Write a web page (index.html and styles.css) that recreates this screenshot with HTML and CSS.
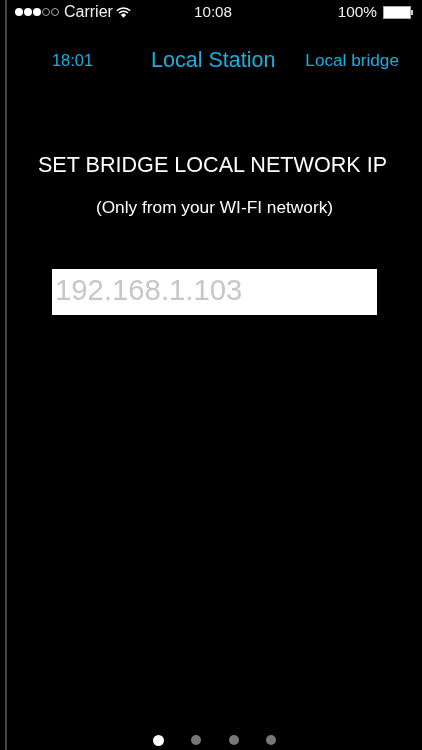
FILE: index.html
```html
<!DOCTYPE html>
<html lang="en">
<head>
    <meta charset="UTF-8">
    <meta name="viewport" content="width=device-width, initial-scale=1.0">
    <title>Local bridge</title>
    <link rel="stylesheet" href="styles.css">
</head>
<body>
    <div class="screen">
        <div class="status-bar">
            <div class="status-left">
                <div class="signal">
                    <span class="dot"></span>
                    <span class="dot"></span>
                    <span class="dot"></span>
                    <span class="dot empty"></span>
                    <span class="dot empty"></span>
                </div>
                <span class="carrier">Carrier</span>
                <svg class="wifi" width="15" height="11" viewBox="0 0 15 11">
                    <path d="M0.8 3.7 A9.6 9.6 0 0 1 14.2 3.7" fill="none" stroke="#fff" stroke-width="1.5"/>
                    <path d="M3 6 A6.4 6.4 0 0 1 12 6" fill="none" stroke="#fff" stroke-width="1.5"/>
                    <path d="M7.5 10.8 L4.9 7.9 A3.7 3.7 0 0 1 10.1 7.9 Z" fill="#fff"/>
                </svg>
            </div>
            <span class="clock">10:08</span>
            <div class="status-right">
                <span class="percent">100%</span>
                <div class="battery"></div>
                <div class="battery-tip"></div>
            </div>
        </div>

        <div class="nav-bar">
            <span class="nav-left">18:01</span>
            <span class="nav-title">Local Station</span>
            <span class="nav-right">Local bridge</span>
        </div>

        <div class="content">
            <h2>SET BRIDGE LOCAL NETWORK IP</h2>
            <p>(Only from your WI-FI network)</p>
            <input class="ip-input" type="text" placeholder="192.168.1.103">
        </div>

        <div class="pager">
            <span class="page active"></span>
            <span class="page"></span>
            <span class="page"></span>
            <span class="page"></span>
        </div>
    </div>
</body>
</html>
```

FILE: styles.css
```css
html, body {
    margin: 0;
    height: 100%;
    background: #000;
    overflow: hidden;
}
body {
    font-family: "Liberation Sans", Arial, sans-serif;
    color: #fff;
}
.screen {
    display: flex;
    flex-direction: column;
    box-sizing: border-box;
    height: 750px;
    margin-left: 5px;
    border-left: 2px solid #4a4644;
    filter: blur(0.4px);
}
.status-bar {
    display: grid;
    grid-template-columns: 1fr auto 1fr;
    align-items: center;
    height: 24px;
    font-size: 15px;
    color: #f2f2f2;
}
.status-left {
    display: flex;
    align-items: center;
    padding-left: 8px;
}
.signal {
    display: flex;
    gap: 1px;
}
.dot {
    box-sizing: border-box;
    width: 8px;
    height: 8px;
    border-radius: 50%;
    background: #fff;
}
.dot.empty {
    background: none;
    border: 1px solid #aaa;
}
.carrier {
    margin-left: 5px;
    font-size: 16px;
}
.wifi {
    margin-left: 3px;
}
.clock {
    margin: -1px 3px 0 0;
    font-size: 15.2px;
}
.status-right {
    display: flex;
    align-items: center;
    justify-content: flex-end;
    padding-right: 9px;
}
.percent {
    margin-right: 6px;
    font-size: 15.4px;
}
.battery {
    box-sizing: border-box;
    width: 28px;
    height: 13px;
    border: 1px solid #aaa;
    background: #fff;
}
.battery-tip {
    width: 2px;
    height: 5px;
    background: #ccc;
}
.nav-bar {
    display: flex;
    align-items: center;
    height: 72px;
    color: #17afe0;
}
.nav-left {
    margin-left: 45px;
    font-size: 16.4px;
}
.nav-title {
    margin-left: 58px;
    font-size: 21.5px;
}
.nav-right {
    margin-left: 30px;
    font-size: 17.2px;
}
.content {
    display: flex;
    flex-direction: column;
    flex: 1;
    align-items: center;
    padding-top: 57px;
}
.content h2 {
    margin: 0 4px 0 0;
    font-size: 21.6px;
    font-weight: normal;
    line-height: 24px;
}
.content p {
    margin: 21px 0 0;
    font-size: 17.3px;
    line-height: 19px;
}
.ip-input {
    box-sizing: border-box;
    align-self: flex-start;
    width: 325px;
    height: 46px;
    margin: 52px 0 0 45px;
    padding: 0 3px 4px;
    border: 0;
    border-radius: 0;
    background: #fff;
    font-family: inherit;
    font-size: 29.3px;
}
.ip-input::placeholder {
    color: #c7c7c7;
    opacity: 1;
}
.pager {
    display: flex;
    align-items: center;
    gap: 27.3px;
    height: 20px;
    padding-left: 146px;
}
.page {
    width: 10px;
    height: 10px;
    border-radius: 50%;
    background: #777;
}
.page.active {
    width: 11px;
    height: 11px;
    background: #fff;
}
```
